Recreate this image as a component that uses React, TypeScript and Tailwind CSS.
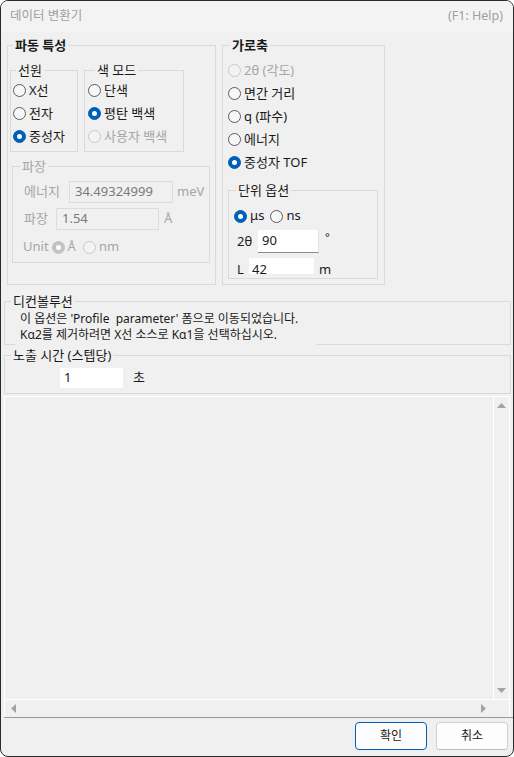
import type { ReactNode } from "react"

function Radio({
    label,
    checked = false,
    disabled = false,
    className = "",
}: {
    label: string
    checked?: boolean
    disabled?: boolean
    className?: string
}) {
    const ring = checked
        ? disabled
            ? "bg-[#c2c2c2] border-[#c2c2c2]"
            : "bg-[#005fb8] border-[#005fb8]"
        : disabled
          ? "bg-[#f3f3f3] border-[#c8c8c8]"
          : "bg-[#f7f7f7] border-[#5c5c5c]"
    return (
        <label
            className={`flex items-center gap-[3px] ${disabled ? "text-[#a6a6a6]" : "text-[#1a1a1a]"} ${className}`}
        >
            <span
                className={`flex h-[13px] w-[13px] shrink-0 items-center justify-center rounded-full border ${ring}`}
            >
                {checked && <span className="h-[5px] w-[5px] rounded-full bg-white" />}
            </span>
            <span>{label}</span>
        </label>
    )
}

function Group({
    title,
    className = "",
    legendClass = "",
    children,
}: {
    title: string
    className?: string
    legendClass?: string
    children?: ReactNode
}) {
    return (
        <fieldset className={`shrink-0 border border-[#dadada] ${className}`}>
            <legend className={`px-[2px] text-[13px] leading-[18px] ${legendClass}`}>{title}</legend>
            {children}
        </fieldset>
    )
}

function Arrow({ dir }: { dir: "up" | "down" | "left" | "right" }) {
    const pts = {
        up: "0,5 4.5,0 9,5",
        down: "0,0 9,0 4.5,5",
        left: "5,0 5,9 0,4.5",
        right: "0,0 5,4.5 0,9",
    }[dir]
    const vertical = dir === "up" || dir === "down"
    return (
        <svg width={vertical ? 9 : 5} height={vertical ? 5 : 9} viewBox={vertical ? "0 0 9 5" : "0 0 5 9"}>
            <polygon points={pts} fill="#a3a3a3" />
        </svg>
    )
}

export default function App() {
    return (
        <div className="h-[757px] w-[514px] bg-white">
            <div className="flex h-full flex-col overflow-hidden rounded-[8px] border border-[#2a2a2a] bg-[#f0f0f0] font-['Noto_Sans','Noto_Sans_CJK_KR',sans-serif] text-[13px] text-[#1a1a1a]">
                {/* title bar */}
                <div className="flex h-[31px] shrink-0 items-center justify-between bg-[#f3f3f3] pl-[9px] pr-[10px] text-[12.5px] text-[#9f9f9f]">
                    <span>데이터 변환기</span>
                    <span>(F1: Help)</span>
                </div>

                {/* top row */}
                <div className="mt-[4px] flex gap-[6px] pl-[6px]">
                    <Group title="파동 특성" className="h-[249px] w-[209px]" legendClass="ml-[5px] font-semibold">
                        <div className="ml-[2px] mt-[7px] flex gap-[6px]">
                            <Group title="선원" className="h-[91px] w-[68px]" legendClass="ml-[5px]">
                                <div className="pl-[2px]">
                                    <Radio label="X선" className="h-[23px]" />
                                    <Radio label="전자" className="h-[23px]" />
                                    <Radio label="중성자" checked className="h-[23px]" />
                                </div>
                            </Group>
                            <Group title="색 모드" className="h-[91px] w-[100px]" legendClass="ml-[10px]">
                                <div className="pl-[3px]">
                                    <Radio label="단색" className="h-[23px]" />
                                    <Radio label="평탄 백색" checked className="h-[23px]" />
                                    <Radio label="사용자 백색" disabled className="h-[23px]" />
                                </div>
                            </Group>
                        </div>
                        <Group
                            title="파장"
                            className="ml-[4px] mt-[5px] h-[106px] w-[198px]"
                            legendClass="ml-[7px] text-[#a6a6a6]"
                        >
                            <div className="pl-[11px] text-[12px] text-[#a6a6a6]">
                                <div className="mt-[6px] flex h-[22px] items-center">
                                    <span className="w-[45px] text-[13px]">에너지</span>
                                    <div className="flex h-[22px] w-[104px] items-center border border-[#dcdcdc] pl-[5px] text-[13px] text-[#7a7a7a]">
                                        34.49324999
                                    </div>
                                    <span className="ml-[4px] text-[13px]">meV</span>
                                </div>
                                <div className="mt-[5px] flex h-[22px] items-center">
                                    <span className="w-[32px] text-[13px]">파장</span>
                                    <div className="flex h-[22px] w-[103px] items-center border border-[#dcdcdc] pl-[5px] text-[13px] text-[#7a7a7a]">
                                        1.54
                                    </div>
                                    <span className="ml-[5px] text-[13px]">Å</span>
                                </div>
                                <div className="mt-[6px] flex h-[22px] items-center text-[13px]">
                                    <span className="-ml-[1px]">Unit</span>
                                    <Radio label="Å" checked disabled className="ml-[3px]" />
                                    <Radio label="nm" disabled className="ml-[7px]" />
                                </div>
                            </div>
                        </Group>
                    </Group>

                    <Group title="가로축" className="h-[249px] w-[163px]" legendClass="ml-[7px] font-semibold">
                        <div className="mt-[5px] pl-[5px]">
                            <Radio label="2θ (각도)" disabled className="h-[23px]" />
                            <Radio label="면간 거리" className="h-[23px]" />
                            <Radio label="q (파수)" className="h-[23px]" />
                            <Radio label="에너지" className="h-[23px]" />
                            <Radio label="중성자 TOF" checked className="h-[23px]" />
                            <Group title="단위 옵션" className="mt-[7px] h-[98px] w-[150px]" legendClass="ml-[7px]">
                                <div className="h-[75px] pl-[5px]">
                                    <div className="mt-[7px] flex h-[20px] items-center">
                                        <Radio label="μs" checked />
                                        <Radio label="ns" className="ml-[6px]" />
                                    </div>
                                    <div className="mt-[4px] flex h-[23px] items-center">
                                        <span className="ml-[3px] w-[21px]">2θ</span>
                                        <div className="flex h-[23px] w-[61px] items-center border-b border-r border-b-[#8a8a8a] border-r-[#e4e4e4] bg-white pl-[4px]">
                                            90
                                        </div>
                                        <span className="ml-[6px] self-start text-[11px] leading-[14px]">°</span>
                                    </div>
                                    <div className="mt-[5px] flex h-[16px] items-start leading-[22px]">
                                        <span className="ml-[3px] w-[12px]">L</span>
                                        <div className="h-[16px] w-[65px] bg-white pl-[3px]">42</div>
                                        <span className="ml-[5px]">m</span>
                                    </div>
                                </div>
                            </Group>
                        </div>
                    </Group>
                </div>

                {/* deconvolution */}
                <Group title="디컨볼루션" className="ml-[3px] mt-[7px] h-[53px] w-[507px]" legendClass="ml-[6px]">
                    <div className="ml-[11px] h-[35px] w-[300px] bg-[#f0f0f0] pl-[4px] pt-[1px] text-[12px] leading-[16px]">
                        <div className="whitespace-pre">이 옵션은 'Profile  parameter' 폼으로 이동되었습니다.</div>
                        <div className="whitespace-pre">Kα2를 제거하려면 X선 소스로 Kα1을 선택하십시오.</div>
                    </div>
                </Group>

                {/* exposure */}
                <Group title="노출 시간 (스텝당)" className="ml-[3px] mt-[1px] h-[48px] w-[507px]" legendClass="ml-[6px]">
                    <div className="mt-[4px] flex h-[20px] items-center">
                        <div className="ml-[55px] flex h-[20px] w-[63px] items-center bg-white pl-[4px]">1</div>
                        <span className="ml-[10px]">초</span>
                    </div>
                </Group>

                {/* scroll area */}
                <div className="ml-[3px] mt-[2px] flex h-[321px] w-[506px] flex-col border-l border-r border-t border-white">
                    <div className="flex flex-1">
                        <div className="flex-1" />
                        <div className="flex w-[16px] flex-col items-center justify-between border-l border-white py-[6px]">
                            <Arrow dir="up" />
                            <Arrow dir="down" />
                        </div>
                    </div>
                    <div className="flex h-[18px] border-t border-white">
                        <div className="flex flex-1 items-center justify-between pl-[6px] pr-[7px]">
                            <Arrow dir="left" />
                            <Arrow dir="right" />
                        </div>
                        <div className="w-[16px]" />
                    </div>
                </div>
                <div className="ml-[3px] h-[1px] bg-[#9a9a9a]" />

                {/* buttons */}
                <div className="mt-[4px] flex justify-end gap-[9px] pr-[5px] text-[12px]">
                    <button className="h-[28px] w-[72px] rounded-[4px] border border-[#005fb8] bg-[#fdfdfd]">
                        확인
                    </button>
                    <button className="h-[28px] w-[72px] rounded-[4px] border border-[#d0d0d0] border-b-[#bcbcbc] bg-[#fdfdfd]">
                        취소
                    </button>
                </div>
            </div>
        </div>
    )
}
